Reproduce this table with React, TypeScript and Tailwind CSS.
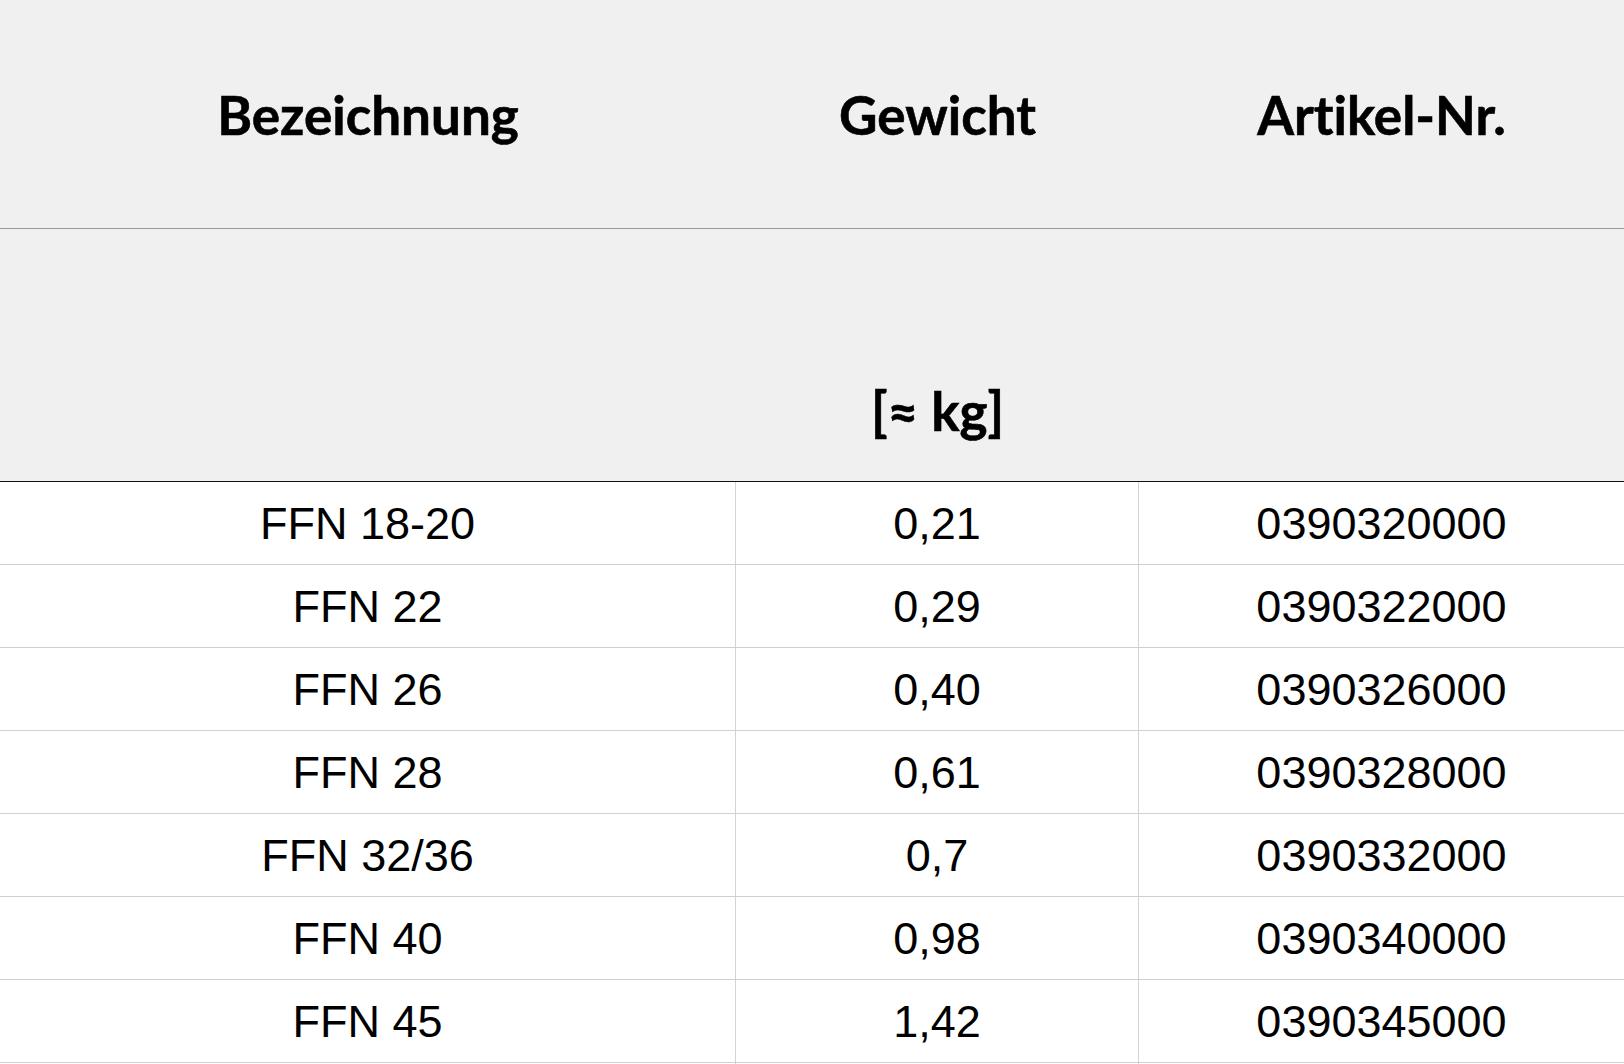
import React from "react";

const rows: [string, string, string][] = [
  ["FFN 18-20", "0,21", "0390320000"],
  ["FFN 22", "0,29", "0390322000"],
  ["FFN 26", "0,40", "0390326000"],
  ["FFN 28", "0,61", "0390328000"],
  ["FFN 32/36", "0,7", "0390332000"],
  ["FFN 40", "0,98", "0390340000"],
  ["FFN 45", "1,42", "0390345000"],
];

const head =
  "font-['Lato','Open_Sans',sans-serif] font-bold text-[53px] text-black leading-none [font-variant-ligatures:none] [-webkit-text-stroke:0.6px_black]";
const body = "font-['Liberation_Sans',Arial,sans-serif] text-[45px] text-black leading-none";

export default function App() {
  return (
    <div className="w-[1624px] h-[1064px] overflow-hidden bg-white">
      <div className="bg-[#f0f0f0]">
        <div className="grid grid-cols-[736px_403px_485px] h-[229px] border-b border-[#9a9a9a] items-center">
          <div className={`${head} text-center`}>Bezeichnung</div>
          <div className={`${head} text-center`}>Gewicht</div>
          <div className={`${head} text-center`}>Artikel-Nr.</div>
        </div>
        <div className="grid grid-cols-[736px_403px_485px] h-[253px] border-b border-[#111] items-end pb-[44px]">
          <div />
          <div className={`${head} text-center`}>[≈ kg]</div>
          <div />
        </div>
      </div>
      {rows.map((r) => (
        <div key={r[0]} className="grid grid-cols-[736px_403px_485px] h-[83px] border-b border-[#d0d0d0]">
          <div className={`${body} flex items-center justify-center border-r border-[#d4d4d4]`}>{r[0]}</div>
          <div className={`${body} flex items-center justify-center border-r border-[#d4d4d4]`}>{r[1]}</div>
          <div className={`${body} flex items-center justify-center`}>{r[2]}</div>
        </div>
      ))}
      <div className="grid grid-cols-[736px_403px_485px] h-[83px]">
        <div className="border-r border-[#d4d4d4]" />
        <div className="border-r border-[#d4d4d4]" />
        <div />
      </div>
    </div>
  );
}
